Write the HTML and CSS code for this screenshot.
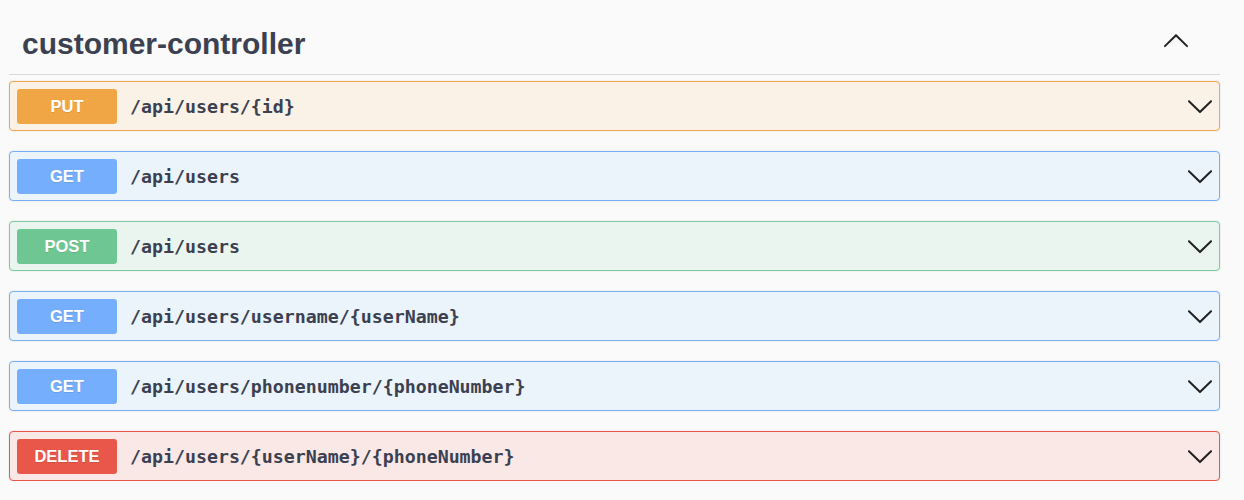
FILE: index.html
```html
<!DOCTYPE html>
<html lang="en">
<head>
<meta charset="utf-8">
<title>customer-controller</title>
<link rel="stylesheet" href="styles.css">
</head>
<body>
<div class="section">
  <div class="tag">
    <h3 class="tag-title">customer-controller</h3>
    <svg class="arrow up" viewBox="0 0 20 20" width="28" height="28"><path d="M17.418 14.891c.272.268.709.268.979 0s.271-.701 0-.969l-7.908-7.830c-.27-.268-.707-.268-.979 0l-7.908 7.830c-.27.268-.27.701 0 .969.271.268.709.268.979 0L10 7.75l7.418 7.141z"/></svg>
  </div>
  <div class="ops">
    <div class="op put">
      <span class="method">PUT</span>
      <span class="path">/api/users/{id}</span>
      <svg class="arrow" viewBox="0 0 20 20" width="28" height="28"><path d="M17.418 6.109c.272-.268.709-.268.979 0s.271.701 0 .969l-7.908 7.83c-.27.268-.707.268-.979 0l-7.908-7.83c-.27-.268-.27-.701 0-.969.271-.268.709-.268.979 0L10 13.25l7.418-7.141z"/></svg>
    </div>
    <div class="op get">
      <span class="method">GET</span>
      <span class="path">/api/users</span>
      <svg class="arrow" viewBox="0 0 20 20" width="28" height="28"><path d="M17.418 6.109c.272-.268.709-.268.979 0s.271.701 0 .969l-7.908 7.83c-.27.268-.707.268-.979 0l-7.908-7.83c-.27-.268-.27-.701 0-.969.271-.268.709-.268.979 0L10 13.25l7.418-7.141z"/></svg>
    </div>
    <div class="op post">
      <span class="method">POST</span>
      <span class="path">/api/users</span>
      <svg class="arrow" viewBox="0 0 20 20" width="28" height="28"><path d="M17.418 6.109c.272-.268.709-.268.979 0s.271.701 0 .969l-7.908 7.83c-.27.268-.707.268-.979 0l-7.908-7.83c-.27-.268-.27-.701 0-.969.271-.268.709-.268.979 0L10 13.25l7.418-7.141z"/></svg>
    </div>
    <div class="op get">
      <span class="method">GET</span>
      <span class="path">/api/users/username/{userName}</span>
      <svg class="arrow" viewBox="0 0 20 20" width="28" height="28"><path d="M17.418 6.109c.272-.268.709-.268.979 0s.271.701 0 .969l-7.908 7.83c-.27.268-.707.268-.979 0l-7.908-7.83c-.27-.268-.27-.701 0-.969.271-.268.709-.268.979 0L10 13.25l7.418-7.141z"/></svg>
    </div>
    <div class="op get">
      <span class="method">GET</span>
      <span class="path">/api/users/phonenumber/{phoneNumber}</span>
      <svg class="arrow" viewBox="0 0 20 20" width="28" height="28"><path d="M17.418 6.109c.272-.268.709-.268.979 0s.271.701 0 .969l-7.908 7.83c-.27.268-.707.268-.979 0l-7.908-7.83c-.27-.268-.27-.701 0-.969.271-.268.709-.268.979 0L10 13.25l7.418-7.141z"/></svg>
    </div>
    <div class="op delete">
      <span class="method">DELETE</span>
      <span class="path">/api/users/{userName}/{phoneNumber}</span>
      <svg class="arrow" viewBox="0 0 20 20" width="28" height="28"><path d="M17.418 6.109c.272-.268.709-.268.979 0s.271.701 0 .969l-7.908 7.83c-.27.268-.707.268-.979 0l-7.908-7.83c-.27-.268-.27-.701 0-.969.271-.268.709-.268.979 0L10 13.25l7.418-7.141z"/></svg>
    </div>
  </div>
</div>
</body>
</html>
```
FILE: styles.css
```css
html, body {
  margin: 0;
  padding: 0;
  background: #fafafa;
}
body {
  font-family: "Liberation Sans", Arial, sans-serif;
  color: #3b4151;
}
.section {
  width: 1211px;
  margin-left: 9px;
}
.tag {
  display: flex;
  align-items: center;
  height: 75px;
  box-sizing: border-box;
  padding: 14px 30px 0 13px;
  border-bottom: 1px solid #d8d9dc;
}
.tag-title {
  flex: 1;
  margin: 0;
  font-size: 30px;
  line-height: 36px;
  font-weight: 700;
  color: #3b4151;
}
.arrow {
  display: block;
  fill: #222;
  flex: none;
}
.tag .arrow {
  margin-top: -8px;
}
.ops {
  display: flex;
  flex-direction: column;
  gap: 20px;
  padding-top: 6px;
}
.op {
  display: flex;
  align-items: center;
  height: 50px;
  box-sizing: border-box;
  border: 1px solid;
  border-radius: 4px;
  padding: 0 5px 0 7px;
  box-shadow: 0 0 2px rgba(0,0,0,.12);
}
.method {
  width: 100px;
  height: 35px;
  flex: none;
  display: flex;
  align-items: center;
  justify-content: center;
  border-radius: 3px;
  color: #fff;
  font-size: 16.5px;
  font-weight: 700;
  text-shadow: 0 1px 0 rgba(0,0,0,.1);
  margin-top: 1px;
}
.path {
  flex: 1;
  margin-left: 13px;
  font-family: "DejaVu Sans Mono", monospace;
  font-size: 18.25px;
  font-weight: 700;
  color: #3b4151;
}
.put { background: #faf1e7; border-color: #f2a84a; }
.put .method { background: #f1a645; }
.get { background: #ebf3fb; border-color: #78aef5; }
.get .method { background: #74aefc; }
.post { background: #ebf5ef; border-color: #7dc9a0; }
.post .method { background: #6ec792; }
.delete { background: #fae8e7; border-color: #e9574a; }
.delete .method { background: #e8574a; }
```
